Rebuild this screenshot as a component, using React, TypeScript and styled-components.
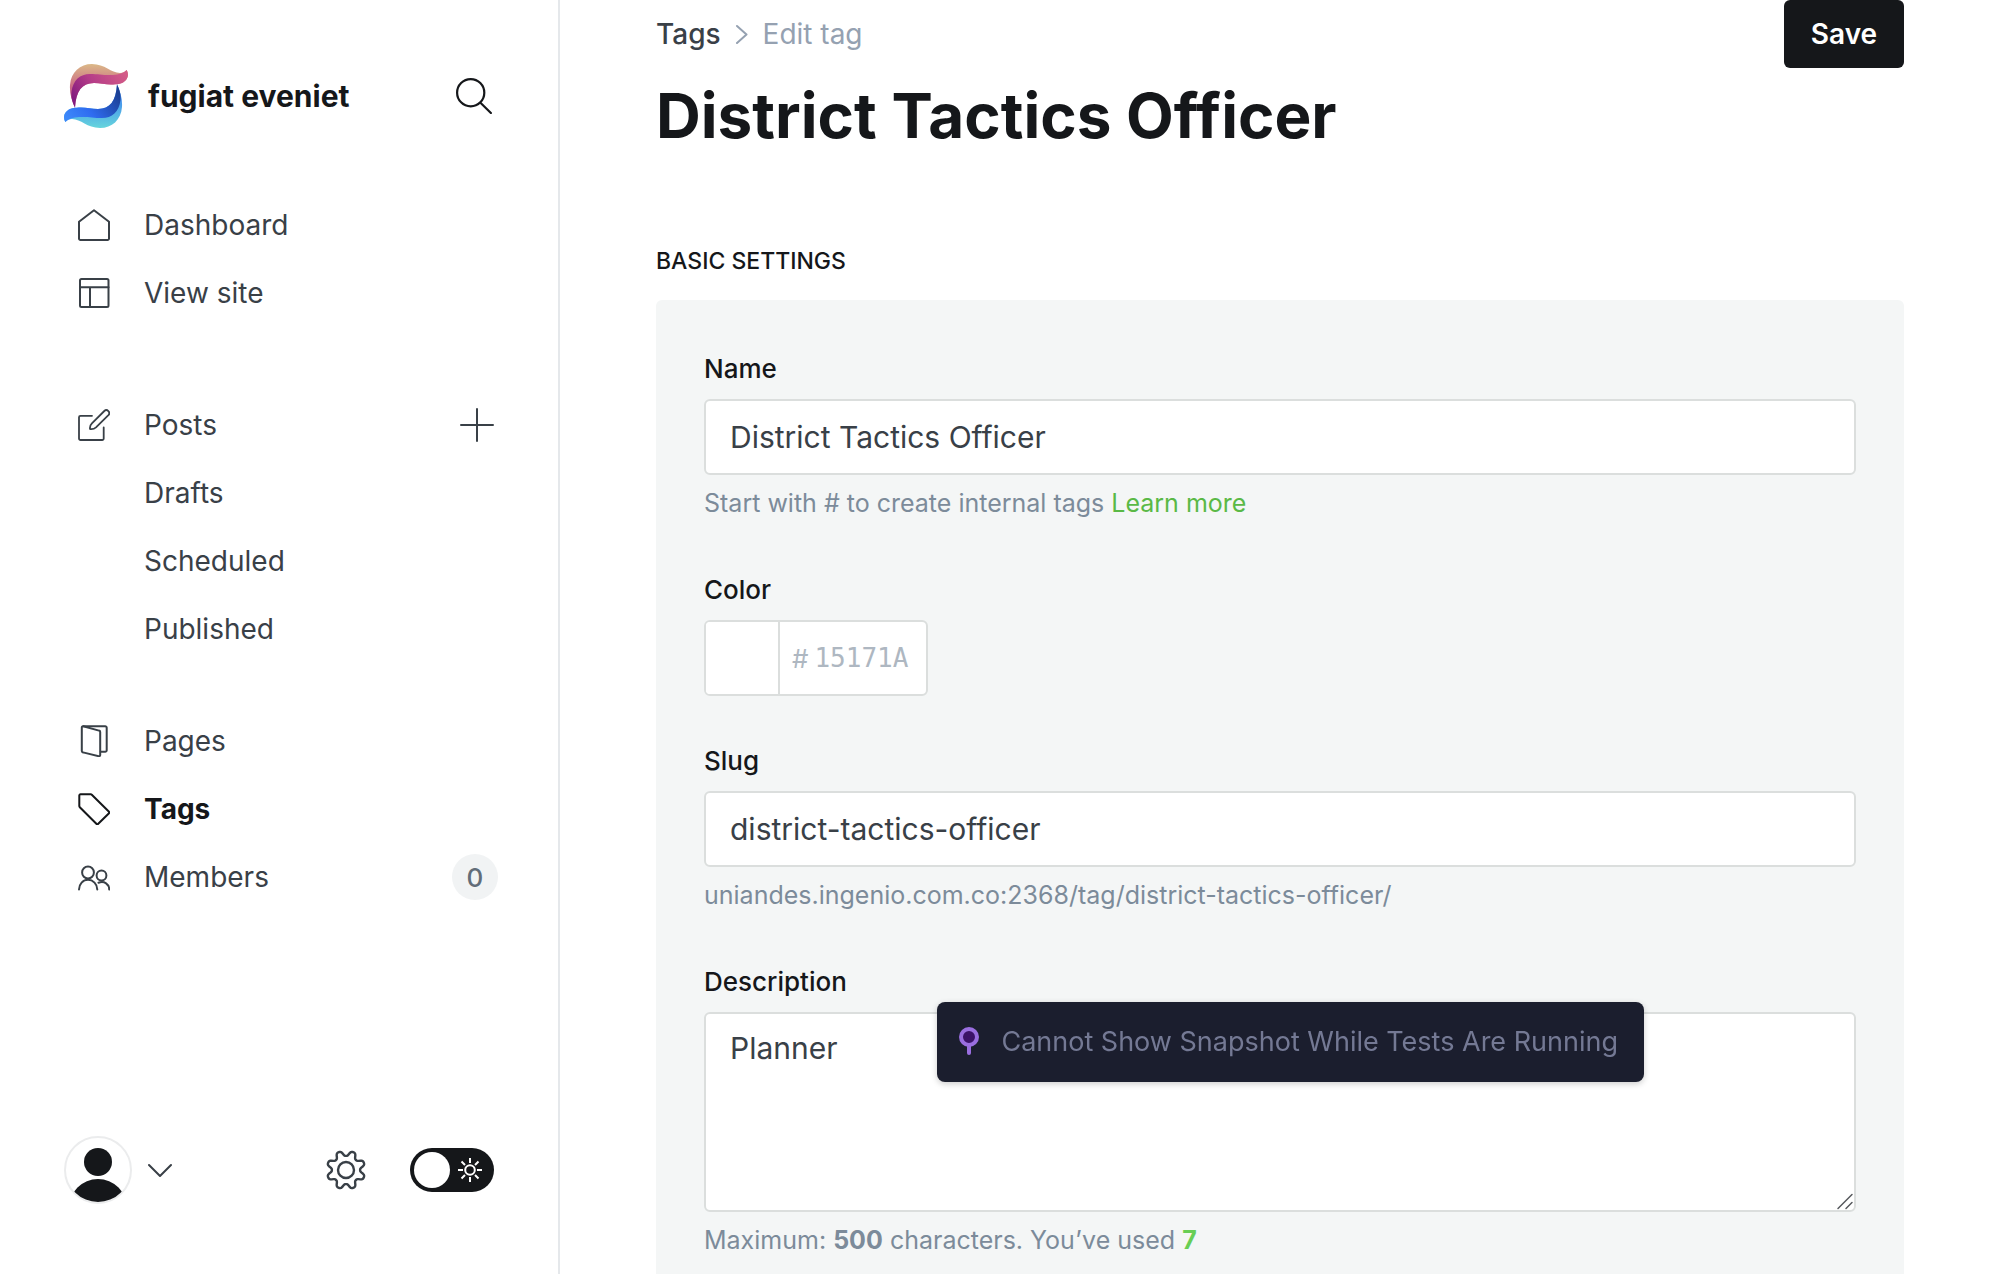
import React, { useState } from 'react';
import styled, { createGlobalStyle } from 'styled-components';

const ink = '#15171a';
const body = '#394047';
const muted = '#7c8b9a';
const line = '#dbdedd';

const GlobalStyle = createGlobalStyle`
  *, *::before, *::after { box-sizing: border-box; }
  body {
    margin: 0;
    background: #fff;
    color: ${body};
    font-family: Inter, "Liberation Sans", sans-serif;
    font-size: 28px;
  }
  button, input, textarea { font: inherit; color: inherit; }
  a { color: inherit; text-decoration: none; }
`;

const Shell = styled.div`
  display: grid;
  grid-template-columns: 560px minmax(0, 1fr);
  height: 100vh;
`;

const Sidebar = styled.aside`
  display: flex;
  flex-direction: column;
  padding: 64px 64px 70px;
  border-right: 2px solid #e5e8eb;
`;

const Brand = styled.header`
  display: flex;
  align-items: center;
  gap: 20px;
  margin-bottom: 63px;
  padding-right: 2px;
`;

const SiteName = styled.strong`
  flex: 1;
  color: ${ink};
  font-size: 30px;
  font-weight: 700;
`;

const IconButton = styled.button`
  display: flex;
  align-items: center;
  padding: 0;
  border: 0;
  background: none;
  color: ${body};
  cursor: pointer;
`;

const SearchButton = styled(IconButton)`
  color: ${ink};
`;

const Nav = styled.nav`
  display: flex;
  flex-direction: column;
`;

const NavGroup = styled.ul<{ $gap?: number }>`
  margin: 0 0 ${(p) => p.$gap ?? 0}px;
  padding: 0;
  list-style: none;
`;

const NavRow = styled.li`
  display: flex;
  align-items: center;
  height: 68px;
  padding-left: 14px;
`;

const NavLink = styled.a<{ $active?: boolean; $nested?: boolean }>`
  display: flex;
  flex: 1;
  align-items: center;
  gap: 34px;
  padding-left: ${(p) => (p.$nested ? 66 : 0)}px;
  color: ${(p) => (p.$active ? ink : body)};
  font-weight: ${(p) => (p.$active ? 700 : 400)};
`;

const Count = styled.span`
  display: flex;
  align-items: center;
  justify-content: center;
  width: 46px;
  height: 46px;
  margin-right: -4px;
  border-radius: 50%;
  background: #f1f3f4;
  color: #626d79;
  font-size: 26px;
  font-weight: 500;
`;

const SidebarFooter = styled.footer`
  display: flex;
  align-items: center;
  justify-content: space-between;
  margin-top: auto;
`;

const FooterTools = styled.div`
  display: flex;
  align-items: center;
  gap: 44px;
`;

const UserButton = styled(IconButton)`
  gap: 16px;
`;

const Switch = styled.label`
  position: relative;
  display: block;
  height: 44px;

  svg {
    position: absolute;
    top: 10px;
    right: 12px;
    color: #fff;
    pointer-events: none;
  }
`;

const SwitchInput = styled.input`
  appearance: none;
  display: block;
  width: 84px;
  height: 44px;
  margin: 0;
  padding: 4px;
  border-radius: 22px;
  background: ${ink};
  cursor: pointer;

  &::before {
    content: '';
    display: block;
    width: 36px;
    height: 36px;
    border-radius: 50%;
    background: #fff;
  }
`;

const Main = styled.main`
  padding: 0 96px 96px;
  overflow-y: auto;
  scrollbar-width: none;
`;

const PageHeader = styled.header`
  display: flex;
  align-items: flex-start;
  justify-content: space-between;
`;

const Breadcrumb = styled.nav`
  display: flex;
  align-items: center;
  gap: 14px;
  height: 68px;
  color: #95a1b1;

  a {
    color: ${body};
    font-weight: 500;
  }
`;

const Title = styled.h1`
  margin: 8px 0 0;
  color: ${ink};
  font-size: 62px;
  font-weight: 700;
  line-height: 80px;
`;

const SaveButton = styled.button`
  width: 120px;
  height: 68px;
  padding: 0;
  border: 0;
  border-radius: 6px;
  background: ${ink};
  color: #fff;
  font-weight: 600;
  cursor: pointer;
`;

const SectionTitle = styled.h2`
  margin: 84px 0 18px;
  color: ${ink};
  font-size: 23px;
  font-weight: 500;
  line-height: 42px;
  text-transform: uppercase;
`;

const Panel = styled.form`
  display: flex;
  flex-direction: column;
  gap: 44px;
  padding: 48px;
  border-radius: 6px;
  background: #f4f6f6;
`;

const Field = styled.div`
  display: flex;
  flex-direction: column;
`;

const Label = styled.label`
  margin-bottom: 9px;
  color: ${ink};
  font-size: 26px;
  font-weight: 500;
  line-height: 42px;
`;

const TextInput = styled.input`
  width: 100%;
  height: 76px;
  padding: 0 24px;
  border: 2px solid ${line};
  border-radius: 6px;
  outline: 0;
  background: #fff;
  font-size: 30px;
`;

const TextAreaBox = styled.div`
  position: relative;

  svg {
    position: absolute;
    right: 2px;
    bottom: 2px;
    color: #55585c;
    pointer-events: none;
  }
`;

const TextArea = styled.textarea`
  display: block;
  width: 100%;
  height: 200px;
  padding: 12px 24px;
  border: 2px solid ${line};
  border-radius: 6px;
  outline: 0;
  background: #fff;
  font-size: 30px;
  line-height: 44px;
  resize: vertical;

  &::-webkit-resizer { background: transparent; }
`;

const Hint = styled.p`
  margin: 6px 0 0;
  color: ${muted};
  font-size: 25px;
  line-height: 44px;

  a { color: #5ab946; }
`;

const Used = styled.b`
  color: #68ce55;
`;

const ColorBox = styled.div`
  display: flex;
  width: 224px;
  height: 76px;
  border: 2px solid ${line};
  border-radius: 6px;
  background: #fff;
  overflow: hidden;
`;

const Swatch = styled.input`
  appearance: none;
  width: 74px;
  height: 100%;
  padding: 0;
  border: 0;
  border-right: 2px solid ${line};
  background: #fff;

  &::-webkit-color-swatch-wrapper { padding: 4px; }
  &::-webkit-color-swatch { border: 0; }
`;

const HexField = styled.label`
  display: flex;
  flex: 1;
  align-items: center;
  gap: 6px;
  min-width: 0;
  padding-left: 12px;
  color: #aeb7c1;
  font-size: 26px;
`;

const HexInput = styled.input`
  width: 100%;
  min-width: 0;
  padding: 0;
  border: 0;
  outline: 0;
  background: none;
  font-family: "DejaVu Sans Mono", monospace;

  &::placeholder { color: #aeb7c1; opacity: 1; }
`;

const Toast = styled.div`
  position: fixed;
  right: 356px;
  bottom: 192px;
  display: flex;
  align-items: center;
  gap: 22px;
  height: 80px;
  padding: 0 26px 2px 22px;
  border-radius: 8px;
  background: #1b1e2e;
  box-shadow: 0 2px 6px rgba(0, 0, 0, 0.2);
  color: #747994;
  font-size: 27px;
  white-space: nowrap;
`;

const Icon = ({ size = 32, weight = 2, children }: { size?: number; weight?: number; children: React.ReactNode }) => (
  <svg
    width={size}
    height={size}
    viewBox={`0 0 ${size} ${size}`}
    fill="none"
    stroke="currentColor"
    strokeWidth={weight}
    strokeLinecap="round"
    strokeLinejoin="round"
    aria-hidden="true"
  >
    {children}
  </svg>
);

const HomeIcon = () => (
  <Icon><path d="M1 12.7 16 1.2 31 12.7V29.5a1.5 1.5 0 0 1-1.5 1.5h-27A1.5 1.5 0 0 1 1 29.5Z" /></Icon>
);

const SiteIcon = () => (
  <Icon>
    <rect x="2" y="2" width="28.5" height="28" rx="1.5" />
    <path d="M2 10.3h28.5M12 10.3V30" />
  </Icon>
);

const PostsIcon = () => (
  <Icon weight={1.8}>
    <path d="M14 6.8H2.5A1.5 1.5 0 0 0 1 8.3v21.2A1.5 1.5 0 0 0 2.5 31h21.7a1.5 1.5 0 0 0 1.5-1.5V18.5" />
    <path d="M12 20c-.3-2.2.4-4.1 1.9-5.6L26.3 2a2.9 2.9 0 0 1 4.1 4.1L18 18.3c-1.6 1.5-3.7 2-6 1.7Z" />
  </Icon>
);

const PagesIcon = () => (
  <Icon>
    <path d="M5.3 1.2 21 5.6a1.5 1.5 0 0 1 1.2 1.5V30a1.2 1.2 0 0 1-1.5 1.2L5 27.4a1.5 1.5 0 0 1-1.2-1.5V2.5a1.3 1.3 0 0 1 1.5-1.3Z" />
    <path d="M5.3 1.2h21.9a1.5 1.5 0 0 1 1.5 1.5v22.5a1.5 1.5 0 0 1-1.5 1.5h-4.5" />
  </Icon>
);

const TagIcon = () => (
  <Icon><path d="M2.5 1.3h10.3a1.5 1.5 0 0 1 1 .4L31 18.8a1 1 0 0 1 0 1.4L20 31a1 1 0 0 1-1.4 0L1.8 14.2a1.5 1.5 0 0 1-.5-1.1V2.5a1.2 1.2 0 0 1 1.2-1.2Z" /></Icon>
);

const MembersIcon = () => (
  <Icon>
    <circle cx="10" cy="11.5" r="5.9" />
    <circle cx="23.5" cy="14.5" r="4.9" />
    <path d="M1 28.5C1 23 5 18.8 10 18.8s9.3 4.2 9.3 9.7M20.5 21.7c6-2.2 10.7 1.6 10.7 6.8" />
  </Icon>
);

const SearchIcon = () => (
  <Icon size={36} weight={2.2}>
    <circle cx="14.7" cy="14.7" r="13.6" />
    <path d="m24.7 25 10.2 10" />
  </Icon>
);

const PlusIcon = () => (
  <Icon size={34}><path d="M17 1v32M1 17h32" /></Icon>
);

const ChevronDown = () => (
  <Icon size={24}><path d="m1 7 11 11 11-11" /></Icon>
);

const ChevronRight = () => (
  <svg width="14" height="20" viewBox="0 0 14 20" fill="none" stroke="currentColor" strokeWidth="2" strokeLinecap="round" strokeLinejoin="round" aria-hidden="true">
    <path d="m2 2 9.500 8.500L2 19" />
  </svg>
);

/* Outline of an eight-toothed wheel, sampled every three degrees. */
const gearPath = Array.from({ length: 120 }, (_, i) => {
  const angle = (i * 3 * Math.PI) / 180;
  const wave = Math.tanh(1.4 * Math.cos(8 * (angle - Math.PI / 8))) / Math.tanh(1.4);
  const r = 16.7 + 2.6 * wave;
  return `${i ? 'L' : 'M'}${(20 + r * Math.cos(angle)).toFixed(2)} ${(20 + r * Math.sin(angle)).toFixed(2)}`;
}).join('') + 'Z';

const GearIcon = () => (
  <Icon size={40} weight={2.4}>
    <path d={gearPath} />
    <circle cx="20" cy="20" r="8" />
  </Icon>
);

const SunIcon = () => (
  <Icon size={24}>
    <circle cx="12" cy="12" r="4.8" />
    <path strokeLinecap="butt" d="M12 0v5M12 19v5M0 12h5M19 12h5M3.5 3.5 7 7M17 17l3.5 3.5M3.5 20.5 7 17M17 7l3.5-3.5" />
  </Icon>
);

const GripIcon = () => (
  <Icon size={18} weight={1.5}><path d="m2 16.500 14-14M10 16.500l6-6" /></Icon>
);

const PinIcon = () => (
  <svg width="20" height="28" viewBox="0 0 20 28" fill="none" stroke="#9a6ee0" strokeWidth="4" strokeLinecap="round" aria-hidden="true">
    <path d="M10 19v7" />
    <circle cx="10" cy="10" r="8" fill="#3b1268" />
  </svg>
);

const Avatar = () => (
  <svg width="68" height="68" viewBox="0 0 68 68" aria-hidden="true">
    <defs>
      <clipPath id="avatar-clip"><circle cx="34" cy="34" r="32" /></clipPath>
    </defs>
    <circle cx="34" cy="34" r="33" fill="#fff" stroke="#ebeced" strokeWidth="2" />
    <g fill={ink} clipPath="url(#avatar-clip)">
      <circle cx="34" cy="26" r="14" />
      <circle cx="34" cy="72" r="29" />
    </g>
  </svg>
);

const Logo = () => {
  const outer = 'M11 43.5C7.500 36 5.500 29 6 21 7 8 16 0 28 0c13 0 19 9 28 9 3 0 5-1 6.700-3 1.800 3 1.800 7-.7 10-3.500 4-9 4.500-15 4.500-6 0-11-1.500-17-1.500-12 0-18 8-19 24.500Z';
  const inner = 'M11 43.5C8.500 39 7 34 7.500 28 9 16 16 10 26 10c9 0 14 1.500 23 1 6-.4 10.500-2 13.700-5 1.800 3 1.800 7-.7 10-3.500 4-9 4.500-15 4.500-6 0-11-1.500-17-1.500-12 0-18 8-19 24.500Z';
  return (
    <svg width="64" height="64" viewBox="0 0 64 64" aria-hidden="true">
      <defs>
        <linearGradient id="tan" x1="0" y1="0" x2="0" y2="1">
          <stop offset="0" stopColor="#dbb987" /><stop offset=".5" stopColor="#cc6c86" /><stop offset="1" stopColor="#a43486" />
        </linearGradient>
        <linearGradient id="magenta" x1="0" y1=".7" x2="1" y2=".2">
          <stop offset="0" stopColor="#841b7f" /><stop offset=".45" stopColor="#b53d88" /><stop offset="1" stopColor="#d45c88" />
        </linearGradient>
        <linearGradient id="aqua" x1="0" y1="0" x2="0" y2="1">
          <stop offset="0" stopColor="#66d5dc" /><stop offset=".6" stopColor="#4696ec" /><stop offset="1" stopColor="#2f70e0" />
        </linearGradient>
        <linearGradient id="blue" x1="0" y1=".7" x2="1" y2=".2">
          <stop offset="0" stopColor="#1b3f94" /><stop offset=".6" stopColor="#2f6cf0" /><stop offset="1" stopColor="#3d88fa" />
        </linearGradient>
      </defs>
      <path d={outer} fill="url(#tan)" />
      <path d={inner} fill="url(#magenta)" />
      <g transform="rotate(180 32 32)">
        <path d={outer} fill="url(#aqua)" />
        <path d={inner} fill="url(#blue)" />
      </g>
    </svg>
  );
};

export default function App() {
  const [name, setName] = useState('District Tactics Officer');
  const [slug, setSlug] = useState('district-tactics-officer');
  const [description, setDescription] = useState('Planner');

  return (
    <>
      <GlobalStyle />
      <Shell>
        <Sidebar>
          <Brand>
            <Logo />
            <SiteName>fugiat eveniet</SiteName>
            <SearchButton type="button" aria-label="Search"><SearchIcon /></SearchButton>
          </Brand>
          <Nav aria-label="Main">
            <NavGroup $gap={64}>
              <NavRow><NavLink href="#dashboard"><HomeIcon />Dashboard</NavLink></NavRow>
              <NavRow><NavLink href="#site"><SiteIcon />View site</NavLink></NavRow>
            </NavGroup>
            <NavGroup $gap={44}>
              <NavRow>
                <NavLink href="#posts"><PostsIcon />Posts</NavLink>
                <IconButton type="button" aria-label="New post"><PlusIcon /></IconButton>
              </NavRow>
              <NavRow><NavLink $nested href="#drafts">Drafts</NavLink></NavRow>
              <NavRow><NavLink $nested href="#scheduled">Scheduled</NavLink></NavRow>
              <NavRow><NavLink $nested href="#published">Published</NavLink></NavRow>
            </NavGroup>
            <NavGroup>
              <NavRow><NavLink href="#pages"><PagesIcon />Pages</NavLink></NavRow>
              <NavRow><NavLink $active href="#tags"><TagIcon />Tags</NavLink></NavRow>
              <NavRow>
                <NavLink href="#members"><MembersIcon />Members</NavLink>
                <Count>0</Count>
              </NavRow>
            </NavGroup>
          </Nav>
          <SidebarFooter>
            <UserButton type="button" aria-label="User menu"><Avatar /><ChevronDown /></UserButton>
            <FooterTools>
              <IconButton type="button" aria-label="Settings"><GearIcon /></IconButton>
              <Switch>
                <SwitchInput type="checkbox" role="switch" aria-label="Night shift" />
                <SunIcon />
              </Switch>
            </FooterTools>
          </SidebarFooter>
        </Sidebar>

        <Main>
          <PageHeader>
            <div>
              <Breadcrumb aria-label="Breadcrumb">
                <a href="#tags">Tags</a>
                <ChevronRight />
                <span>Edit tag</span>
              </Breadcrumb>
              <Title>District Tactics Officer</Title>
            </div>
            <SaveButton type="submit" form="tag-form">Save</SaveButton>
          </PageHeader>

          <SectionTitle>Basic settings</SectionTitle>
          <Panel id="tag-form" onSubmit={(e) => e.preventDefault()}>
            <Field>
              <Label htmlFor="name">Name</Label>
              <TextInput id="name" value={name} onChange={(e) => setName(e.target.value)} />
              <Hint>Start with # to create internal tags <a href="#learn">Learn more</a></Hint>
            </Field>
            <Field>
              <Label htmlFor="hex">Color</Label>
              <ColorBox>
                <Swatch type="color" aria-label="Pick a color" defaultValue="#ffffff" />
                <HexField>
                  #
                  <HexInput id="hex" placeholder="15171A" maxLength={6} />
                </HexField>
              </ColorBox>
            </Field>
            <Field>
              <Label htmlFor="slug">Slug</Label>
              <TextInput id="slug" value={slug} onChange={(e) => setSlug(e.target.value)} />
              <Hint>uniandes.ingenio.com.co:2368/tag/district-tactics-officer/</Hint>
            </Field>
            <Field>
              <Label htmlFor="description">Description</Label>
              <TextAreaBox>
                <TextArea id="description" value={description} onChange={(e) => setDescription(e.target.value)} />
                <GripIcon />
              </TextAreaBox>
              <Hint>Maximum: <b>500</b> characters. You’ve used <Used>{description.length}</Used></Hint>
            </Field>
          </Panel>
        </Main>
      </Shell>
      <Toast role="status"><PinIcon />Cannot Show Snapshot While Tests Are Running</Toast>
    </>
  );
}
